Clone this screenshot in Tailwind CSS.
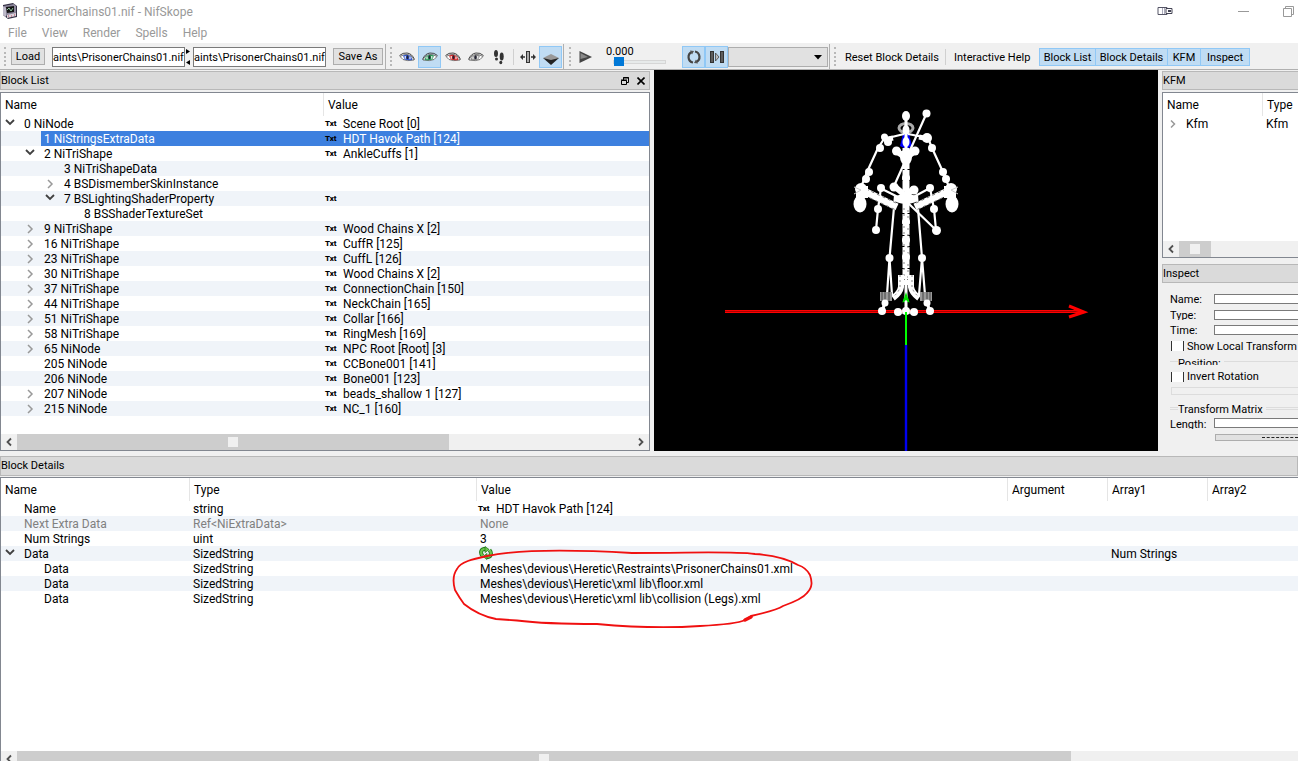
<!DOCTYPE html>
<html lang="en">
<head>
<meta charset="utf-8">
<title>PrisonerChains01.nif - NifSkope</title>
<script src="https://cdn.jsdelivr.net/npm/@tailwindcss/browser@4"></script>
</head>
<body class="flex h-screen flex-col overflow-hidden bg-[#f0f0f0] font-[Roboto,sans-serif] text-[11px] text-black">

<svg class="hidden" aria-hidden="true">
  <symbol id="eye" viewBox="0 0 16 10"><path d="M.5 3.500Q4 .5 8 1Q13 1.500 15.500 7.500" fill="none" stroke="#444" stroke-width="1"/><path d="M1 4.500Q5 2.200 8 2.500Q13 3 15 8Q8 9.500 4 7.500Z" fill="#fff" stroke="#666" stroke-width=".9"/><path d="M4 3.600Q8 1.500 12 4.200L13.500 8Q9 8.800 5.500 7.500Z" fill="currentColor"/><ellipse cx="8.500" cy="5.200" rx="1" ry="2" fill="#223"/><path d="M6.200 4v2.800M11 4.500v2.800" stroke="#fff" stroke-width="1.100"/></symbol>
  <symbol id="eyeflip" viewBox="0 0 16 10"><g transform="translate(16 0) scale(-1 1)"><use href="#eye" width="16" height="10"/></g></symbol>
  <symbol id="left" viewBox="0 0 8 10"><path d="M6 1.500L2.500 5L6 8.500" fill="none" stroke="#505050" stroke-width="1.800"/></symbol>
</svg>

<header class="shrink-0 bg-white text-[#999]">
  <div class="flex h-[22px] items-center pl-[2px]">
    <svg class="mr-[5px] size-4" viewBox="0 0 16 16"><path d="M1 2L11 0l4 3v11l-9 2-5-4Z" fill="#343044"/><path d="M2 3l10-2 2 2v8L5 13 2 11Z" fill="#8d879c"/><path d="M4 4l8-1v6l-7 1Z" fill="#141414"/><path d="M5 7l2-2 2 3 2-3" fill="none" stroke="#8fc6a0"/><path d="M1 3l3 2v9l-3-2Z" fill="#bcb8c8"/><path d="M5 12l9-2v3l-9 2Z" fill="#dcd4dc"/><path d="M6 13h1M9 13h1M12 12h1" stroke="#b2405c"/></svg>
    <h1 class="grow pt-[2px] text-[12px]">PrisonerChains01.nif - NifSkope</h1>
    <button aria-label="Displays" class="mr-[65px]"><svg class="h-[10px] w-4" viewBox="0 0 16 10"><path d="M1 1.500h9v7H1Z" fill="#fff" stroke="#556"/><path d="M5.500 2v6M7.500 2v6" stroke="#aab"/><path d="M9 2.500h6v5H9Z" fill="#fff" stroke="#445"/><path d="M11 5h3" stroke="#445" stroke-width="2"/></svg></button>
    <button aria-label="Minimize" class="mr-[34px] flex h-3 w-[11px] items-center"><span class="h-px w-full bg-[#999]"></span></button>
    <button aria-label="Restore" class="mr-[4px]"><svg class="size-[11px]" viewBox="0 0 11 11" fill="none" stroke="#999"><path d="M.5 2.500h8v8h-8ZM2.500 2.500v-2h8v8h-2"/></svg></button>
  </div>
  <nav class="flex h-[22px] items-center gap-[15px] border-b border-[#f0f0f0] pl-2 text-[12px]">
    <button>File</button><button>View</button><button>Render</button><button>Spells</button><button>Help</button>
  </nav>
</header>

<div role="toolbar" class="flex h-[26px] shrink-0 border-b border-[#b0b0b0] leading-none whitespace-nowrap">
  <div class="flex w-[386px] shrink-0 items-center border-r border-[#b0b0b0] pl-[4px]">
    <span class="mr-[5px] h-[19px] w-0 border-l-2 border-dotted border-[#b8b8b8]"></span>
    <button class="mr-[7px] h-[17px] w-[34px] border border-[#adadad] bg-[#e1e1e1]">Load</button>
    <input aria-label="Load path" value="aints\PrisonerChains01.nif" class="mr-[1px] h-[20px] w-[133px] border border-[#7a7a7a] bg-white pt-[2px]">
    <span class="flex w-[7px] flex-col gap-[6px]"><svg class="h-[5px] w-1" viewBox="0 0 4 5"><path d="M0 0l4 2.500L0 5Z"/></svg><svg class="h-[5px] w-1" viewBox="0 0 4 5"><path d="M4 0L0 2.500 4 5Z"/></svg></span>
    <input aria-label="Save path" value="aints\PrisonerChains01.nif" class="mr-[7px] h-[20px] w-[133px] border border-[#7a7a7a] bg-white pt-[2px]">
    <button class="h-[17px] w-[50px] border border-[#adadad] bg-[#e1e1e1]">Save As</button>
  </div>
  <div class="flex w-[178px] shrink-0 items-center border-r border-[#b0b0b0] pl-[4px]">
    <span class="mr-[4px] h-[19px] w-0 border-l-2 border-dotted border-[#b8b8b8]"></span>
    <button aria-label="View blue" class="grid h-[22px] w-[22px] place-items-center text-[#3155c8]"><svg class="h-[10px] w-4"><use href="#eye"/></svg></button>
    <button aria-label="View green" class="grid h-[22px] w-[23px] place-items-center border border-[#90c8f6] bg-[#c0dcf3] text-[#2e9a5c]"><svg class="h-[10px] w-4"><use href="#eyeflip"/></svg></button>
    <button aria-label="View red" class="grid h-[22px] w-[23px] place-items-center text-[#cf2b2b]"><svg class="h-[10px] w-4"><use href="#eye"/></svg></button>
    <button aria-label="View gray" class="grid h-[22px] w-[23px] place-items-center text-[#888]"><svg class="h-[10px] w-4"><use href="#eyeflip"/></svg></button>
    <button aria-label="Walk" class="grid h-[22px] w-[23px] place-items-center"><svg class="h-4 w-3" viewBox="0 0 12 16" fill="#333"><ellipse cx="3" cy="4.500" rx="2" ry="3.500"/><ellipse cx="3.500" cy="10" rx="1.500" ry="1.500"/><ellipse cx="8.700" cy="7.500" rx="2" ry="4"/><ellipse cx="7.800" cy="13.500" rx="1.500" ry="1.700"/></svg></button>
    <span class="mx-[3px] h-4 w-px bg-[#d0d0d0]"></span>
    <button aria-label="Flip view" class="grid h-[22px] w-[22px] place-items-center"><svg class="h-3 w-4" viewBox="0 0 16 12"><path d="M6 0h4v12H6Z" fill="#333"/><path d="M7 1h2v10H7Z" fill="#aaa"/><path d="M3 3v6L0 6ZM13 3v6l3-3Z" fill="#333"/><path d="M2 6h3M11 6h3" stroke="#333" stroke-width="1.500"/></svg></button>
    <button aria-label="Perspective" class="grid h-[22px] w-[23px] place-items-center border border-[#90c8f6] bg-[#c0dcf3]"><svg class="h-4 w-4" viewBox="0 0 16 16"><path d="M0 9L8 5l8 4-8 4Z" fill="#999"/><path d="M0 9l8 2 8-2-8 7Z" fill="#222"/></svg></button>
  </div>
  <div class="flex w-[266px] shrink-0 items-center border-r border-[#b0b0b0] pl-[5px]">
    <span class="mr-[8px] h-[19px] w-0 border-l-2 border-dotted border-[#b8b8b8]"></span>
    <button aria-label="Play"><svg class="h-3 w-[13px]" viewBox="0 0 13 12"><path d="M.5 0L13 6 .5 12Z" fill="#444"/><path d="M1.500 2L9 6l-7.500 2Z" fill="#888"/></svg></button>
    <label class="ml-[14px] flex w-[60px] flex-col">
      <span class="h-[10px] leading-[12px]">0.000</span>
      <span class="flex h-[11px] items-center pl-[7px]">
        <input type="range" value="0" class="h-[4px] w-full appearance-none border border-[#d6d6d6] bg-[#e7eaea] [&::-webkit-slider-thumb]:h-[9px] [&::-webkit-slider-thumb]:w-[10px] [&::-webkit-slider-thumb]:appearance-none [&::-webkit-slider-thumb]:bg-[#0078d7]">
      </span>
    </label>
    <button aria-label="Loop" class="ml-[16px] grid h-[22px] w-[23px] place-items-center border border-[#90c8f6] bg-[#c0dcf3]"><svg class="size-4" viewBox="0 0 16 16" fill="none" stroke="#444" stroke-width="2.200"><path d="M7 13.500A5.500 5.500 0 0 1 6 3M9 2.500a5.500 5.500 0 0 1 1 10.500"/><path d="M4 1.500l4 .5-2 3.500ZM12 14.500l-4-.5 2-3.500Z" fill="#555" stroke="none"/></svg></button>
    <button aria-label="Switch" class="grid h-[22px] w-[23px] place-items-center border border-[#90c8f6] bg-[#c0dcf3]"><svg class="h-3 w-[14px]" viewBox="0 0 14 12"><path d="M0 0h4v12H0ZM10 0h4v12h-4Z" fill="#333"/><path d="M1.500 1h1v10h-1ZM11.500 1h1v10h-1Z" fill="#888"/><path d="M5.500 2L9 6l-3.500 4Z" fill="#bbb" stroke="#444" stroke-width=".8"/></svg></button>
    <span class="relative">
      <select aria-label="Animation" class="block h-[20px] w-[100px] appearance-none border border-[#adadad] bg-[#e1e1e1]"><option></option></select>
      <svg class="pointer-events-none absolute top-2 right-[6px] h-[5px] w-[8px]" viewBox="0 0 8 5"><path d="M0 0h8L4 4.500Z"/></svg>
    </span>
  </div>
  <div class="flex grow items-center pl-[4px]">
    <span class="mr-[9px] h-[19px] w-0 border-l-2 border-dotted border-[#b8b8b8]"></span>
    <button class="w-[100px] pt-[2px] text-left">Reset Block Details</button>
    <span class="mr-[8px] h-4 w-px bg-[#d0d0d0]"></span>
    <button class="w-[85px] pt-[2px] text-left">Interactive Help</button>
    <button class="h-[18px] w-[57px] border border-[#90c8f6] bg-[#c0dcf3] pt-[2px]">Block List</button>
    <button class="-ml-px h-[18px] w-[73px] border border-[#90c8f6] bg-[#c0dcf3] pt-[2px]">Block Details</button>
    <button class="-ml-px h-[18px] w-[34px] border border-[#90c8f6] bg-[#c0dcf3] pt-[2px]">KFM</button>
    <button class="-ml-px h-[18px] w-[50px] border border-[#90c8f6] bg-[#c0dcf3] pt-[2px]">Inspect</button>
  </div>
</div>

<main class="flex h-[381px] shrink-0">
  <section class="flex w-[650px] shrink-0 flex-col pt-px">
    <h2 class="mb-[2px] flex h-[19px] shrink-0 items-center border border-[#b8b8b8] bg-[#dadada]"><span class="grow pt-[2px]">Block List</span>
      <button aria-label="Float" class="mr-2"><svg class="size-[8px]" viewBox="0 0 8 8" fill="none" stroke="#000"><path d="M.5 3.500h5v4h-5ZM0 3h6M2.500 3V.5h5v5H6M2 1h6"/></svg></button>
      <button aria-label="Close" class="mr-1"><svg class="size-[8px]" viewBox="0 0 8 8"><path d="M.5.5l7 7M7.500.5l-7 7" stroke="#000" stroke-width="1.600"/></svg></button>
    </h2>
    <div class="flex grow flex-col border border-[#828790] bg-white">
      <table class="w-full table-fixed border-separate border-spacing-0 text-[12px]">
        <colgroup><col class="w-[323px]"><col></colgroup>
        <thead><tr class="h-[23px] text-left"><th class="border-r border-[#e5e5e5] p-0 pl-1 font-normal">Name</th><th class="p-0 pl-1 font-normal">Value</th></tr></thead>
        <tbody id="blocks"></tbody>
      </table>
      <div class="mt-auto flex h-[16px] items-center bg-[#f0f0f0]">
        <svg class="mx-[4px] h-[10px] w-2"><use href="#left"/></svg>
        <div class="grid h-full w-2/3 place-items-center bg-[#cdcdcd]"><span class="size-[10px] bg-[#f0f0f0]"></span></div>
        <svg class="mr-[4px] ml-auto h-[10px] w-2 rotate-180"><use href="#left"/></svg>
      </div>
    </div>
  </section>

  <section class="mx-1 grow overflow-hidden bg-black" aria-label="Viewport">
    <svg class="h-full w-full" viewBox="654 70 504 381">
      <path d="M906 345V451" stroke="#0000f0" stroke-width="2.400"/>
      <ellipse cx="906" cy="128" rx="7" ry="4.500" fill="none" stroke="#aaa" stroke-width="3"/>
      <path d="M903 134L900 146L904 148H908L912 146L909 134Z" fill="#00f"/>
      <path d="M902.500 302L906 292l3.500 10Z" fill="#0d0"/>
      <g fill="none" stroke="#fff" stroke-width="2.200">
        <path d="M906 113V312" stroke-width="3"/>
        <path d="M926.500 113.500L894 186M904 134l-20 5-6 9-11 24-3 8-5 11M908 134l20 4 4 10 11 24 3 8 5 11"/>
        <path d="M884 140l9-2M919 137l10 2" stroke-width="5"/>
        <path d="M881 188L878 209 876 230M930 188L934 209 936 230M907 202L936 230M880 188l26 13 24-13"/>
        <path d="M895 196L889.500 258 887 295M889.500 258L892 295M917 196L922 258 925 295M922 258L919 295"/>
        <path d="M896.500 151L906 158 915 151M894 186l12 10 8-8" stroke-width="6"/>
        <path d="M888 292l-3 11-3 8M924 292l3 11 3 8M898 312h16" stroke-width="3"/>
      </g>
      <path d="M906 148V285" stroke="#fff" stroke-width="7" stroke-dasharray="10 1"/>
      <path d="M864 191l33 16M948 191l-33 16" stroke="#fff" stroke-width="7"/>
      <path d="M866 189l30 14M946 189l-30 14M870 198l26 12M942 198l-26 12" stroke="#777" stroke-width="1" stroke-dasharray="3 3"/>
      <path d="M904 208V280M908 210V280" stroke="#888" stroke-width="1" stroke-dasharray="2 4"/>
      <path d="M901 275V287Q900 293 893 298M911 275V287Q912 293 919 298" fill="none" stroke="#fff" stroke-width="6"/>
      <path d="M900 275V287Q899 292 893 297M912 275V287Q913 292 919 297" fill="none" stroke="#888" stroke-width="1" stroke-dasharray="2 3"/>
      <path d="M902.500 303L906 292l3.500 11-3.500-3Z" fill="#0d0"/>
      <g fill="#fff">
        <ellipse cx="906" cy="116" rx="4" ry="5"/><ellipse cx="906" cy="130" rx="3.500" ry="5"/><ellipse cx="906" cy="142" rx="3.500" ry="5"/><circle cx="926.500" cy="113.500" r="4"/>
        <circle cx="884.500" cy="137" r="3.500"/><circle cx="888" cy="142" r="4"/><circle cx="880" cy="148" r="4"/><circle cx="927" cy="138" r="5"/><circle cx="932" cy="148" r="4"/>
        <circle cx="869" cy="172" r="4"/><circle cx="866" cy="179" r="4"/><circle cx="943" cy="172" r="4"/><circle cx="946" cy="179" r="4"/>
        <circle cx="861" cy="189" r="6"/><ellipse cx="860" cy="204" rx="6.500" ry="8.500"/><path d="M856 186h12v12h-12ZM944 186h12v12h-12Z"/><circle cx="951" cy="189" r="6"/><ellipse cx="952" cy="204" rx="6.500" ry="8.500"/>
        <circle cx="896.500" cy="151" r="4.500"/><circle cx="915" cy="151" r="4.500"/><ellipse cx="906" cy="157" rx="6" ry="8"/>
        <circle cx="881" cy="188" r="4"/><circle cx="894" cy="187" r="4.500"/><circle cx="914" cy="190" r="4.500"/><circle cx="930" cy="188" r="4"/><ellipse cx="906" cy="199" rx="12" ry="5"/>
        <circle cx="878" cy="209" r="4"/><circle cx="934" cy="209" r="4"/><circle cx="876" cy="230" r="4"/><circle cx="936.500" cy="230.500" r="4.500"/>
        <circle cx="889.500" cy="258" r="4"/><circle cx="922" cy="258" r="4"/><circle cx="906" cy="257" r="4"/><circle cx="906" cy="240" r="4"/><circle cx="906" cy="222" r="4"/><circle cx="906" cy="178" r="4"/>
      </g>
      <path d="M880 292h12v9h-12ZM920 292h12v9h-12Z" fill="#999"/>
      <path d="M882 292v9M885 292v9M889 292v9M923 292v9M927 292v9M930 292v9" stroke="#444"/>
      <path d="M854 187l7 3-7 4M958 187l-7 3 7 4" fill="none" stroke="#ccc"/>
      <path d="M725 311.500H1082" stroke="#f00" stroke-width="3"/><path d="M725 311.500H1083" stroke="#a00" stroke-width="1"/>
      <path d="M1069 306l15 6-15 5M1074 309l10 3" fill="none" stroke="#f00" stroke-width="3"/>
      <g fill="#fff"><circle cx="885" cy="303" r="3.500"/><circle cx="882" cy="311" r="4"/><circle cx="898" cy="312" r="4"/><circle cx="906" cy="311" r="4"/><circle cx="914" cy="312" r="4"/><circle cx="930" cy="311" r="4"/><circle cx="927" cy="303" r="3.500"/></g>
      <path d="M906 312V345" stroke="#0f0" stroke-width="2"/>
    </svg>
  </section>

  <aside class="flex w-[136px] shrink-0 flex-col overflow-hidden pt-px whitespace-nowrap">
    <h2 class="mb-[2px] flex h-[19px] shrink-0 items-center border border-r-0 border-[#b8b8b8] bg-[#dadada] pt-[2px]">KFM</h2>
    <div class="flex h-[166px] shrink-0 flex-col border border-r-0 border-[#828790] bg-white">
      <table class="w-full table-fixed border-separate border-spacing-0 text-[12px]">
        <colgroup><col class="w-[100px]"><col></colgroup>
        <thead><tr class="h-[23px] text-left"><th class="border-r border-[#e5e5e5] p-0 pl-1 font-normal">Name</th><th class="p-0 pl-1 font-normal">Type</th></tr></thead>
        <tbody><tr class="leading-[17px]"><td class="p-0"><div class="flex h-[15px]"><svg class="mr-[9px] ml-[6px] h-[10px] w-2 self-center" viewBox="0 0 8 10"><path d="M2 1.500L5.500 5 2 8.500" fill="none" stroke="#999" stroke-width="1.500"/></svg>Kfm</div></td><td class="p-0 pl-[3px]"><div class="h-[15px]">Kfm</div></td></tr></tbody>
      </table>
      <div class="mt-auto flex h-[16px] items-center bg-[#f0f0f0]">
        <svg class="mx-[4px] h-[10px] w-2"><use href="#left"/></svg>
        <div class="grid h-full w-[32px] place-items-center bg-[#cdcdcd]"><span class="size-[10px] bg-[#f0f0f0]"></span></div>
      </div>
    </div>
    <h2 class="mt-[6px] flex h-[19px] shrink-0 items-center border border-r-0 border-[#b8b8b8] bg-[#dadada] pt-[2px]">Inspect</h2>
    <form class="flex flex-col pt-[8px] pl-2 leading-[15px]">
      <label class="flex h-[16px] items-center"><span class="w-[44px] shrink-0">Name:</span><input class="h-[10px] w-0 grow border border-r-0 border-[#7a7a7a] bg-white"></label>
      <label class="flex h-[15px] items-center"><span class="h-[11px] w-[44px] shrink-0 overflow-hidden leading-[13px]">Type:</span><input class="h-[10px] w-0 grow border border-r-0 border-[#7a7a7a] bg-white"></label>
      <label class="flex h-[16px] items-center"><span class="w-[44px] shrink-0">Time:</span><input class="h-[10px] w-0 grow border border-r-0 border-[#7a7a7a] bg-white"></label>
      <label class="flex h-[16px] items-center"><input type="checkbox" class="mr-[3px] ml-px h-[10px] w-[13px] shrink-0 appearance-none border-x border-[#333] bg-white">Show Local Transform</label>
      <div class="flex h-[15px] items-center"><span class="h-px w-2 bg-[#dcdcdc]"></span><span class="mr-[3px] h-[7px] overflow-hidden leading-[11px]">Position:</span><span class="h-px grow bg-[#dcdcdc]"></span></div>
      <label class="flex h-[15px] items-center"><input type="checkbox" class="mr-[3px] ml-px h-[10px] w-[13px] shrink-0 appearance-none border-x border-[#333] bg-white">Invert Rotation</label>
      <div class="mt-[3px] ml-px h-[8px] border border-r-0 border-[#dcdcdc]"></div>
      <div class="mt-[6px] flex h-[15px] items-center"><span class="h-[3px] w-2 border-y border-[#dcdcdc]"></span><span class="mr-[3px] h-[9px] overflow-hidden leading-[11px]">Transform Matrix</span><span class="h-[3px] grow border-y border-[#dcdcdc]"></span></div>
      <label class="flex h-[14px] items-center"><span class="h-[11px] w-[44px] shrink-0 overflow-hidden leading-[13px]">Length:</span><input class="h-[10px] w-0 grow border border-r-0 border-[#7a7a7a] bg-white"></label>
      <button type="button" aria-label="Copy transform" class="mt-[4px] ml-[45px] flex h-[7px] items-center border border-r-0 border-[#adadad] bg-[#e1e1e1] pl-[46px]"><span class="w-full border-t border-dashed border-[#222]"></span></button>
    </form>
  </aside>
</main>

<section class="relative mt-[5px] flex min-h-0 grow flex-col">
  <h2 class="mb-px flex h-[20px] shrink-0 items-center border border-[#b8b8b8] bg-[#dadada] pt-px">Block Details</h2>
  <div class="flex min-h-0 grow flex-col border-t border-l border-[#828790] bg-white">
    <table class="w-full table-fixed border-separate border-spacing-0 text-[12px]">
      <colgroup><col class="w-[189px]"><col class="w-[287px]"><col class="w-[531px]"><col class="w-[100px]"><col class="w-[100px]"><col></colgroup>
      <thead><tr class="h-[23px] text-left">
        <th class="border-r border-[#e5e5e5] p-0 pl-1 font-normal">Name</th><th class="border-r border-[#e5e5e5] p-0 pl-1 font-normal">Type</th><th class="border-r border-[#e5e5e5] p-0 pl-1 font-normal">Value</th><th class="border-r border-[#e5e5e5] p-0 pl-1 font-normal">Argument</th><th class="border-r border-[#e5e5e5] p-0 pl-1 font-normal">Array1</th><th class="p-0 pl-1 font-normal">Array2</th>
      </tr></thead>
      <tbody id="details"></tbody>
    </table>
    <div class="mt-auto h-[10px] shrink-0 overflow-hidden bg-[#f0f0f0]">
      <div class="flex h-[16px] items-center">
        <svg class="mx-[4px] h-[10px] w-2"><use href="#left"/></svg>
        <div class="grid h-full w-[1054px] place-items-center bg-[#cdcdcd]"><span class="size-[10px] bg-[#f0f0f0]"></span></div>
      </div>
    </div>
  </div>
  <!-- hand-drawn marker round the three mesh paths -->
  <svg class="pointer-events-none absolute top-[84px] left-[440px] h-[100px] w-[400px]" viewBox="0 0 400 100" fill="none" stroke="#f01010" stroke-width="1.800" stroke-linecap="round"><path d="M47 16C33 19 20 22 17 29C12 36 13 43 15 50C19 57 21 60 24 64C34 72 46 77 56 79L77 80.500C105 84 130 84 157 84C190 87 230 88 260 86C280 85 297 84 305 80L311 76C320 74 337 70 343 66C357 61 364 57 367 53C373 47 372 41 370 35C368 31 364 27 358 25C346 18 330 15 315 14C290 11 255 13 192 13C140 10 80 9 47 16"/><path d="M305 80l4-2 2-1" stroke-width="3.500"/></svg>
</section>

<template id="down"><svg class="h-[10px] w-[10px] shrink-0" viewBox="0 0 10 10"><path d="M1 4L5 8 9 4" fill="none" stroke="#404040" stroke-width="1.800"/></svg></template>
<template id="right"><svg class="h-[10px] w-[10px] shrink-0 self-center" viewBox="0 0 10 10"><path d="M3 1L7 5 3 9" fill="none" stroke="#999" stroke-width="1.500"/></svg></template>
<template id="none"><span class="w-[10px] shrink-0"></span></template>
<script>
const part = id => document.getElementById(id).innerHTML;
const txt = '<b class="mr-[4px] w-[14px] shrink-0 font-[\'Open_Sans\',sans-serif] text-[8px] leading-[16px] font-extrabold">Txt</b>';
const blocks = [
  [0,'down','0 NiNode','Scene Root [0]'],[1,'none','1 NiStringsExtraData','HDT Havok Path [124]'],[1,'down','2 NiTriShape','AnkleCuffs [1]'],
  [2,'none','3 NiTriShapeData',null],[2,'right','4 BSDismemberSkinInstance',null],[2,'down','7 BSLightingShaderProperty',''],[3,'none','8 BSShaderTextureSet',null],
  [1,'right','9 NiTriShape','Wood Chains X [2]'],[1,'right','16 NiTriShape','CuffR [125]'],[1,'right','23 NiTriShape','CuffL [126]'],[1,'right','30 NiTriShape','Wood Chains X [2]'],
  [1,'right','37 NiTriShape','ConnectionChain [150]'],[1,'right','44 NiTriShape','NeckChain [165]'],[1,'right','51 NiTriShape','Collar [166]'],[1,'right','58 NiTriShape','RingMesh [169]'],
  [1,'right','65 NiNode','NPC Root [Root] [3]'],[1,'none','205 NiNode','CCBone001 [141]'],[1,'none','206 NiNode','Bone001 [123]'],[1,'right','207 NiNode','beads_shallow 1 [127]'],[1,'right','215 NiNode','NC_1 [160]']];
document.getElementById('blocks').innerHTML = blocks.map(([depth, arrow, name, value], i) => {
  const on = i === 1;
  return `<tr class="leading-[17px] ${i % 2 ? 'bg-[#f0f4f9]' : 'bg-white'}"><td class="p-0"><div class="flex h-[15px]" style="padding-left:${4 + depth * 20}px">${part(arrow)}<span class="${on ? 'ml-[6px] grow bg-[#3d80df] pl-[3px] text-white' : 'ml-[9px]'}">${name}</span></div></td><td class="p-0"><div class="flex h-[15px] pl-px ${on ? 'bg-[#3d80df]' : ''}">${value === null ? '' : txt}<span class="${on ? 'text-white' : ''}">${value ?? ''}</span></div></td></tr>`;
}).join('');
const cycle = '<svg class="-ml-px size-[14px]" viewBox="0 0 14 14" fill="none"><path d="M3.500 10C1 7 2 3.500 5 3L7 3M10.500 4C13 7 12 10.500 9 11H7" stroke="#267a1c" stroke-width="4"/><path d="M3.500 10C1 7 2 3.500 5 3L7 3M10.500 4C13 7 12 10.500 9 11H7" stroke="#6cc94e" stroke-width="2.200"/><path d="M6 .5l4 3-4 3ZM8 7.500l-4 3 4 3Z" fill="#6cc94e" stroke="#267a1c" stroke-width=".8"/></svg>';
const details = [
  [0,'none','Name','string',txt + 'HDT Havok Path [124]',''],[0,'none','Next Extra Data','Ref&lt;NiExtraData&gt;','None',''],[0,'none','Num Strings','uint','3',''],[0,'down','Data','SizedString',cycle,'Num Strings'],
  [1,'none','Data','SizedString','Meshes\\devious\\Heretic\\Restraints\\PrisonerChains01.xml',''],[1,'none','Data','SizedString','Meshes\\devious\\Heretic\\xml lib\\floor.xml',''],[1,'none','Data','SizedString','Meshes\\devious\\Heretic\\xml lib\\collision (Legs).xml','']];
document.getElementById('details').innerHTML = details.map(([depth, arrow, name, type, value, array], i) =>
  `<tr class="leading-[17px] ${i % 2 ? 'bg-[#f0f4f9]' : 'bg-white'} ${i === 1 ? 'text-[#808080]' : ''}"><td class="p-0"><div class="flex h-[15px]" style="padding-left:${4 + depth * 20}px">${part(arrow)}<span class="ml-[9px]">${name}</span></div></td><td class="p-0 pl-[3px]"><div class="h-[15px]">${type}</div></td><td class="p-0"><div class="flex h-[15px] ${i === 0 ? 'pl-px' : 'pl-[3px]'}">${value}</div></td><td class="p-0"></td><td class="p-0 pl-[3px]"><div class="h-[15px]">${array}</div></td><td class="p-0"></td></tr>`
).join('');
</script>
</body>
</html>
